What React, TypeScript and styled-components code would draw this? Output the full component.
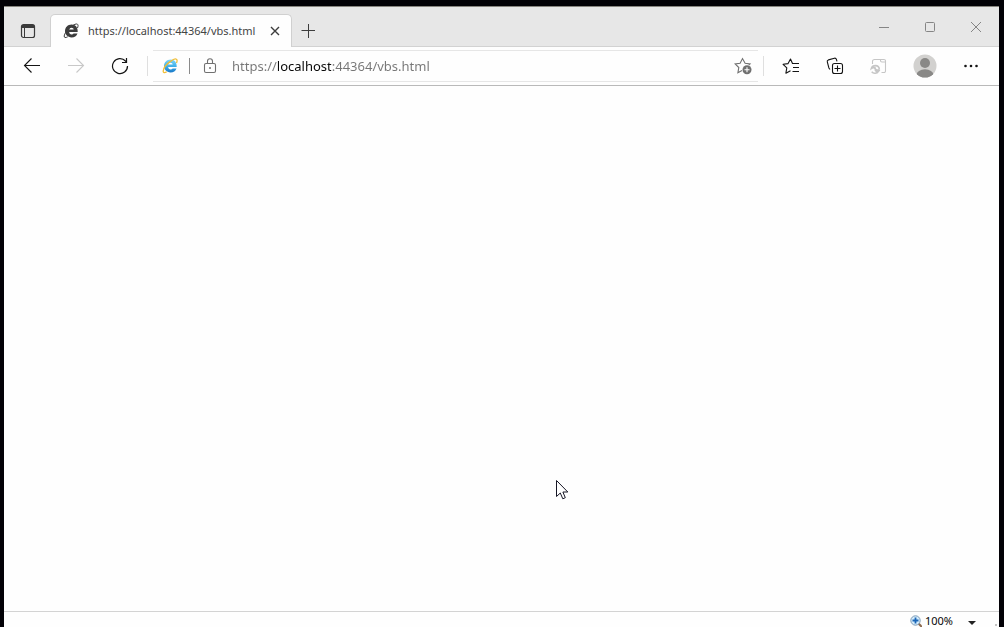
import React, { useState } from "react";
import styled, { createGlobalStyle } from "styled-components";

const GlobalStyle = createGlobalStyle`
  *, *::before, *::after { box-sizing: border-box; }
  body { margin: 0; background: #020106; font-family: "Noto Sans", "Open Sans", sans-serif; }
  button, input, select { font: inherit; }
  svg { display: block; flex: none; }
`;

const Desktop = styled.div`
  height: 100vh;
  padding: 6px 5px 0 4px;
  background: #020106;
`;

const BrowserWindow = styled.div`
  height: 100%;
  display: flex;
  flex-direction: column;
  overflow: hidden;
  background: #fefefe;
  border-top: 1px solid #87857f;
`;

const TitleBar = styled.header`
  flex: none;
  display: flex;
  height: 40px;
  background: #e7e7e7;
  box-shadow: inset 0 -1px #d2d2d2;
`;

const IconButton = styled.button<{ $w?: number; $color?: string }>`
  flex: none;
  display: flex;
  align-items: center;
  justify-content: center;
  width: ${(p) => p.$w ?? 44}px;
  padding: 0;
  border: 0;
  background: none;
  color: ${(p) => p.$color ?? "#141414"};
`;

const TabActions = styled(IconButton)`
  padding: 8px 0 0 2px;
`;

const TabStrip = styled.div`
  flex: 1;
  min-width: 0;
  display: flex;
  padding-top: 7px;
`;

const Tab = styled.div`
  flex: 0 1 242px;
  min-width: 0;
  display: flex;
  align-items: center;
  padding: 0 4px 0 12px;
  border: 1px solid #d0d0d0;
  border-bottom: 0;
  border-radius: 5px 5px 0 0;
  background: #fefefe;
`;

const TabTitle = styled.span`
  flex: 1;
  min-width: 0;
  margin-left: 9px;
  overflow: hidden;
  white-space: nowrap;
  font-size: 11px;
  line-height: 16px;
  color: #444;
`;

const WindowControls = styled.div`
  display: flex;
`;

const Toolbar = styled.nav`
  flex: none;
  display: flex;
  align-items: center;
  height: 39px;
  padding: 0 6px;
  border-bottom: 1px solid #b9b9b9;
`;

const Separator = styled.span`
  flex: none;
  width: 1px;
  height: 20px;
  margin: 0 5px;
  background: #dfdfdf;
`;

const AddressBar = styled.form`
  flex: 1;
  min-width: 0;
  height: 32px;
  display: flex;
  align-items: center;
  padding: 0 5px 0 7px;
  border-top: 1px solid #e6e6e6;
  border-bottom: 1px solid #e6e6e6;
`;

const ModeDivider = styled.span`
  flex: none;
  width: 1px;
  height: 16px;
  margin: 0 8px 0 10px;
  background: #8a8a8a;
`;

/* The host name is dark and the rest of the address is grey. */
const AddressInput = styled.input`
  flex: 1;
  min-width: 0;
  height: 20px;
  margin-left: 10px;
  padding: 0;
  border: 0;
  outline: 0;
  font-size: 13px;
  color: transparent;
  caret-color: #111;
  background: linear-gradient(90deg, #767676 46px, #080808 46px, #080808 99px, #767676 99px);
  background-clip: text;
  -webkit-background-clip: text;
`;

const Page = styled.main`
  position: relative;
  flex: 1;
  min-height: 0;
`;

const Pointer = styled.svg`
  position: absolute;
  left: 552px;
  top: 394px;
`;

const StatusBar = styled.footer`
  flex: none;
  display: flex;
  justify-content: flex-end;
  align-items: flex-start;
  height: 16px;
  padding-top: 3px;
  border-top: 1px solid #d3d3d3;
`;

const ZoomButton = styled.button`
  display: flex;
  align-items: center;
  height: 12px;
  padding: 0;
  border: 0;
  background: none;
  color: #080808;
  font-size: 11px;
  line-height: 12px;
  gap: 3px;
`;

const Grip = styled.span`
  width: 2px;
  height: 2px;
  margin: 9px 2px 0 9px;
  background: #c4c4c4;
`;

const Line = (p: React.SVGProps<SVGSVGElement>) => (
  <svg fill="none" stroke="currentColor" strokeWidth="1.1" aria-hidden="true" {...p} />
);

const ExplorerLogo = ({ colored }: { colored?: boolean }) => (
  <svg width="16" height="16" viewBox="0 0 16 16" fill="none" aria-hidden="true">
    <defs>
      <linearGradient id="blue" x1="0" y1="0" x2="0" y2="1">
        <stop offset="0" stopColor="#7fd6f7" />
        <stop offset="0.5" stopColor="#43b2ea" />
        <stop offset="1" stopColor="#1878c8" />
      </linearGradient>
    </defs>
    <path
      d="M8.600 1.600C4.800 1.600 2 4.500 2 8.100s2.700 6.300 6.600 6.300c2.900 0 5-1.500 5.900-4h-3.900c-.4.7-1.100 1-2 1-1.400 0-2.400-.9-2.400-2.300h8.500c.3-4.400-2-7.500-6.100-7.500ZM6.200 6.600c.2-1.200 1.100-1.900 2.300-1.900s2.100.7 2.200 1.900H6.200Z"
      fill={colored ? "url(#blue)" : "#3c3c3c"}
      fillRule="evenodd"
    />
    <path
      d="M14.500 5c.8-2 .7-3.300-.1-3.800-1.100-.7-3.500.3-6 2.200C4.800 6 1.500 10.300 1.200 13c-.2 1.800 1.300 2 3.500.8"
      stroke={colored ? "#f0bd35" : "#3c3c3c"}
      strokeWidth={colored ? 1.3 : 1}
    />
  </svg>
);

export default function App() {
  const [address, setAddress] = useState("https://localhost:44364/vbs.html");
  return (
    <Desktop>
      <GlobalStyle />
      <BrowserWindow>
        <TitleBar>
          <TabActions $w={46} $color="#3b3b3b" aria-label="Tab actions menu">
            <Line width="16" height="16" viewBox="0 0 16 16" strokeWidth="1.200">
              <rect x="1.500" y="1.500" width="13" height="13" rx="2" />
              <path d="M2 3.500h12" strokeWidth="3" />
              <path d="M4.500 4v10.500" strokeWidth="1" />
            </Line>
          </TabActions>
          <TabStrip>
            <Tab>
              <ExplorerLogo />
              <TabTitle>https://localhost:44364/vbs.html</TabTitle>
              <IconButton $w={24} $color="#3d3d3d" aria-label="Close tab">
                <Line width="10" height="10" viewBox="0 0 10 10" strokeWidth="1.400">
                  <path d="m1 1 8 8M9 1 1 9" />
                </Line>
              </IconButton>
            </Tab>
            <IconButton $w={32} $color="#3d3d3d" aria-label="New tab">
              <Line width="14" height="14" viewBox="0 0 14 14" strokeWidth="1">
                <path d="M7.500 0v14M.500 6.500h14" />
              </Line>
            </IconButton>
          </TabStrip>
          <WindowControls>
            <IconButton $w={46} $color="#858585" aria-label="Minimize">
              <Line width="10" height="10" viewBox="0 0 10 10" strokeWidth="1"><path d="M0 5.500h10" /></Line>
            </IconButton>
            <IconButton $w={46} $color="#858585" aria-label="Maximize">
              <Line width="10" height="10" viewBox="0 0 10 10" strokeWidth="1">
                <rect x="0.500" y="0.500" width="9" height="9" rx="1" />
              </Line>
            </IconButton>
            <IconButton $w={46} $color="#858585" aria-label="Close">
              <Line width="10" height="10" viewBox="0 0 10 10" strokeWidth="1"><path d="m0 0 10 10M10 0 0 10" /></Line>
            </IconButton>
          </WindowControls>
        </TitleBar>

        <Toolbar aria-label="Browser toolbar">
          <IconButton aria-label="Back">
            <Line width="18" height="16" viewBox="0 0 18 16"><path d="M17 7.500H1.500M8.500.500l-7 7 7 7" /></Line>
          </IconButton>
          <IconButton $color="#c8c8c8" aria-label="Forward" disabled>
            <Line width="18" height="16" viewBox="0 0 18 16"><path d="M1 7.500h15.500M9.500.500l7 7-7 7" /></Line>
          </IconButton>
          <IconButton aria-label="Refresh">
            <Line width="18" height="18" viewBox="0 0 18 18" strokeWidth="1.200">
              <path d="M16.500 9A7.500 7.500 0 1 1 14.500 4l1.300 1.300" />
              <path d="M15.500 1v4.500H11" />
            </Line>
          </IconButton>
          <Separator />
          <AddressBar onSubmit={(e) => e.preventDefault()}>
            <IconButton type="button" $w={19} aria-label="Internet Explorer mode">
              <ExplorerLogo colored />
            </IconButton>
            <ModeDivider />
            <IconButton type="button" $w={24} $color="#707070" aria-label="View site information">
              <Line width="14" height="16" viewBox="0 0 14 16">
                <rect x="1.500" y="5.500" width="11" height="9" rx="1.500" />
                <path d="M4.500 5.500V3.200a2.500 2.500 0 0 1 5 0v2.300" />
                <circle cx="7" cy="10" r="1" fill="currentColor" stroke="none" />
              </Line>
            </IconButton>
            <AddressInput
              aria-label="Address and search bar"
              spellCheck={false}
              value={address}
              onChange={(e) => setAddress(e.target.value)}
            />
            <IconButton type="button" $w={20} $color="#707070" aria-label="Add this page to favorites">
              <Line width="18" height="18" viewBox="0 0 18 18">
                <path d="M14.800 8 16 6.900l-4.900-.7L8.500 1.600 6.100 6.200l-5 .7 3.700 3.600-.9 5.300 4.100-2.200" />
                <circle cx="13" cy="12.800" r="4.500" fill="currentColor" stroke="none" />
                <path d="M13 10.300v5M10.500 12.800h5" stroke="#fff" />
              </Line>
            </IconButton>
          </AddressBar>
          <Separator />
          <IconButton aria-label="Favorites">
            <Line width="18" height="18" viewBox="0 0 18 18">
              <path d="M10.500 6.500 8.500 2 6.100 6.600l-5 .7 3.700 3.600-.9 5.300L8.500 13.700M10 6.500h7M11 10.500h6M10.500 14.500h6.500" strokeLinejoin="round" />
            </Line>
          </IconButton>
          <IconButton aria-label="Collections">
            <Line width="18" height="18" viewBox="0 0 18 18">
              <path d="M4 12.500 2.900 11 1.300 4.900c-.3-1 .2-1.700 1.100-2l6-1.700c1-.2 1.700.2 2 1.100l.6 2" />
              <rect x="6.500" y="6.500" width="10" height="10" rx="2" />
              <path d="M11.500 8.500v6M8.500 11.500h6" />
            </Line>
          </IconButton>
          <IconButton $color="#c6c6c6" aria-label="Reload in Internet Explorer mode" disabled>
            <Line width="18" height="18" viewBox="0 0 18 18">
              <path d="M2.500 7V4A2 2 0 0 1 4.500 2.500H14A1.500 1.500 0 0 1 15.500 4v10a1.500 1.500 0 0 1-1.500 1.500h-2.500M10.500 2.500v1a1.500 1.500 0 0 0 1.500 1.500h3.500" />
              <path d="M9.300 12.500C9.300 10 7.700 8.600 5.500 8.600c-2 0-3.500 1-4 2.700 1.400-1 3.300-.8 3.700.500" strokeWidth="1.700" />
              <path d="M9.500 12.500c-.7 1-3.600.900-4.200-.600-.4 1.900 1.200 3 3.200 2.400-1.500 2.300-5 2.800-6.800.500" strokeWidth="1.600" />
            </Line>
          </IconButton>
          <IconButton $w={48} aria-label="Profile">
            <svg width="24" height="24" viewBox="0 0 24 24" aria-hidden="true">
              <defs><clipPath id="avatar"><circle cx="12" cy="12" r="11.500" /></clipPath></defs>
              <g clipPath="url(#avatar)">
                <rect width="24" height="24" fill="#d2d1cf" />
                <circle cx="12" cy="9" r="5" fill="#898886" />
                <ellipse cx="12" cy="20.800" rx="8.500" ry="5.500" fill="#898886" />
              </g>
            </svg>
          </IconButton>
          <IconButton aria-label="Settings and more">
            <svg width="14" height="4" viewBox="0 0 14 4" fill="currentColor" aria-hidden="true">
              <circle cx="1.500" cy="2" r="1.300" /><circle cx="7" cy="2" r="1.300" /><circle cx="12.500" cy="2" r="1.300" />
            </svg>
          </IconButton>
        </Toolbar>

        <Page>
          <Pointer width="13" height="20" viewBox="0 0 13 20" aria-hidden="true">
            <path d="M.5.500v16l3.800-3.500 2.500 5.800 2.500-1.100L6.900 12h4.900Z" fill="#fff" stroke="#161625" />
          </Pointer>
        </Page>

        <StatusBar>
          <ZoomButton aria-label="Change zoom level">
            <svg width="12" height="12" viewBox="0 0 12 12" aria-hidden="true">
              <path d="m8 8 4 4" stroke="#8c6a4e" strokeWidth="2.200" />
              <circle cx="5.500" cy="5.500" r="4.700" fill="#d4ecfb" stroke="#7d9ab5" />
              <path d="M5.500 2.500v6M2.500 5.500h6" stroke="#1a66b8" strokeWidth="1.800" />
            </svg>
            100%
            <svg width="30" height="12" viewBox="0 0 30 12" aria-hidden="true">
              <path d="M12 6h8l-4 4Z" fill="#222" />
            </svg>
          </ZoomButton>
          <Grip />
        </StatusBar>
      </BrowserWindow>
    </Desktop>
  );
}
